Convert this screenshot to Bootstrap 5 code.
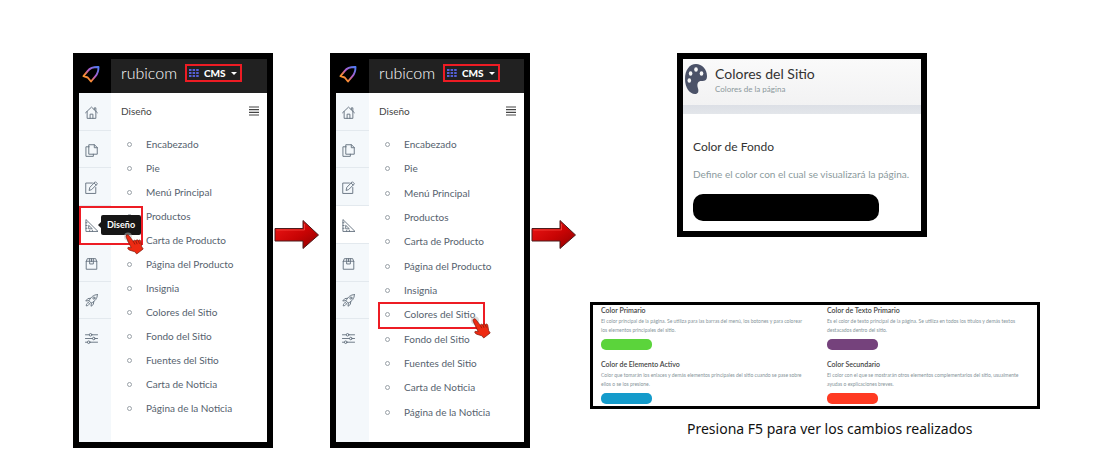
<!DOCTYPE html>
<html lang="es">
<head>
<meta charset="utf-8">
<meta name="viewport" content="width=device-width, initial-scale=1">
<title>Colores del Sitio</title>
<link href="https://cdn.jsdelivr.net/npm/bootstrap@5.3.0/dist/css/bootstrap.min.css" rel="stylesheet">
<style>
body { font-family: Lato, "Liberation Sans", sans-serif; background: #fff; color: #333; }
a { text-decoration: none; color: inherit; }
.guide { display: grid; grid-template-columns: 200fr 57fr 200fr 60fr 450fr; padding: 53px 60px 0 73px; }
.framed { border: 6px solid #000; background: #fff; }
.step-arrow { padding: 0 0 32px 1px; }
.topbar { height: 34px; background: #212121; }
.topbar-row { padding-bottom: 6px; }
.logo-cell { width: var(--rail); padding: 0 0 5px 3px; background: #000; }
.wordmark { font-weight: 300; font-size: 16px; line-height: 20px; color: #fff; width: 64px; margin-left: 10px; }
.cms-btn { border: 2px solid #ed1c24; background: transparent; color: #fff; font-weight: 900; font-size: 10px; line-height: 14px; height: 18px; padding: 0 3px 0 2px; gap: 5px; }
.cms-btn::after { margin: 0 !important; border-width: 3px 3px 0 !important; }
.rail { width: var(--rail); background: #f4f8fb; }
.rail-list { height: 263px; }
.rail-list a { flex: 1; border-bottom: 1px solid #e3e9ee; position: relative; padding-left: 6px; padding-top: 2px; }
.rail-list a:last-child { border-bottom: 0; }
.rail-list a.current { background: #fff; }
.rail-list svg { width: 13px; height: 13px; fill: none; stroke: #66727f; stroke-width: 1; stroke-linejoin: round; stroke-linecap: round; }
.marked { position: absolute; left: 0; top: 0; width: 64px; height: 39px; border: 2px solid #ed1c24; z-index: 2; }
.tip { position: absolute; left: 22px; top: 9px; height: 20px; line-height: 20px; padding: 0 6px; background: #161616; color: #fff; font-size: 9px; font-weight: 700; border-radius: 2px; z-index: 3; }
.tip::before { content: ""; position: absolute; left: -3px; top: 7px; border: 3px solid transparent; border-left: 0; border-right-color: #161616; }
.hand { position: absolute; z-index: 4; width: 22px; height: 24px; }
.rail-list svg.hand, svg.hand { width: 22px; height: 24px; stroke: none; }
.hand-rail { left: 45px; top: 26px; }
.hand-menu { left: 102px; top: 14px; }
.menu-head { height: 39px; padding: 0 8px 3px 10px; font-size: 10px; color: #444; }
.menu { height: var(--menu); font-size: 10px; line-height: 14px; color: #56626e; }
.menu-col { padding-bottom: 18px; }
.menu li { flex: 1; position: relative; padding-left: 35px; }
.menu a::before { content: ""; width: 5px; height: 5px; border: 1px solid #9aa1a8; border-radius: 50%; position: absolute; left: 16px; top: 10px; }
.menu li.picked::before { content: ""; position: absolute; left: 9px; right: 39px; top: 0; bottom: -2px; border: 2px solid #ed1c24; }
.site-card { max-width: 250px; margin-left: 87px; }
.site-head { height: 46px; padding: 5px 2px; gap: 8px; background: linear-gradient(#fafafa, #f2f2f3); }
.site-strip { height: 9px; background: linear-gradient(#dcdfe6, #e3e6ea); }
.site-title { font-size: 14px; line-height: 19px; color: #333; }
.site-sub { font-size: 8px; line-height: 12px; color: #8b989c; }
.site-body { padding: 23px 9px 10px 10px; }
.site-body label { display: block; font-size: 12px; line-height: 20px; color: #333; }
.site-body p { font-size: 10px; line-height: 18px; color: #8b9a9d; margin: 8px 0 11px; }
input[type=color] { display: block; appearance: none; border: 0; padding: 0; background: none; }
input[type=color]::-webkit-color-swatch-wrapper { padding: 0; }
input[type=color]::-webkit-color-swatch { border: 0; border-radius: inherit; }
.pick-big { width: 85%; height: 27px; border-radius: 10px; }
.palette-card { border: 3px solid #000; margin-top: 65px; padding: 0 0 1px 8px; }
.palette-card label { font-size: 7px; line-height: 10px; color: #444; font-weight: 600; }
.palette-card p { font-size: 5px; line-height: 9px; color: #86949a; margin: 2px 0 4px; }
.palette-card .entry { height: 54px; }
.palette-card .entry.low { height: 46px; }
.pick-small { width: 51px; height: 11px; border-radius: 5px; }
.closing { font-family: "Noto Sans", sans-serif; font-size: 14px; line-height: 20px; color: #111; margin: 10px 0 0 97px; }
</style>
</head>
<body>
<svg width="0" height="0" class="position-absolute" aria-hidden="true">
  <defs>
    <linearGradient id="lg" x1="0" y1="1" x2="1" y2="0"><stop offset="0" stop-color="#ffb01f"/><stop offset=".3" stop-color="#f5843a"/><stop offset=".55" stop-color="#b65cc8"/><stop offset="1" stop-color="#4c7cf5"/></linearGradient>
    <linearGradient id="red" x1="0" y1="0" x2="1" y2="1"><stop offset="0" stop-color="#f01818"/><stop offset=".55" stop-color="#c80404"/><stop offset="1" stop-color="#8d0000"/></linearGradient>
    <symbol id="logo" viewBox="0 0 18 18"><path d="M16.500 2C11.500 1.800 8 3 5.800 5.800L1.500 11.200l4.200 1.300L9 16.500l4.500-5.300C15.800 8.500 16.500 5.500 16.500 2z" fill="none" stroke="url(#lg)" stroke-width="1.900" stroke-linejoin="round"/></symbol>
    <symbol id="arrow" viewBox="0 0 46 31"><path d="M1 9.500h28V1.500L44.500 16 29 29.500v-7.500H1z" fill="url(#red)" stroke="#4d1c1c" stroke-width="1"/><path d="M2.500 11h28V5" fill="none" stroke="#ff5a50" stroke-width="1" opacity=".6"/></symbol>
    <symbol id="hand" viewBox="0 0 22 24"><circle cx="4" cy="4.500" r="4" fill="#bbb" opacity=".5"/><path d="M2.500 3.200c.9-.8 2-.3 2.700.7l4 5.300c.6-1.200 1.700-1.300 2.500-.4.700-1.200 1.900-1.200 2.600-.2.800-1 2-.7 2.400.4l1 5.700 1.500 2.300-6.500 5-1.800-2.200-5.200-1.600c-1.700-.7-2.500-1.900-1.500-2.900l3 .4-4.700-9.800c-.6-1.200-.6-2.100 0-2.700z" fill="#ee2a12" stroke="#7a1509" stroke-width=".7"/><path d="M9.300 9.400l1.500 2.800M11.800 9l1.200 2.800M14.400 8.900l1 2.600" stroke="#7a1509" stroke-width=".7" fill="none"/></symbol>
    <symbol id="home" viewBox="0 0 14 14"><path d="M.6 7.300L7 1.200l6.400 6.100M2.300 6v7.300h9.400V6M5.500 13.300V8.800h3v4.500M10 4V2h1.700v3.500"/></symbol>
    <symbol id="copy" viewBox="0 0 14 14"><path d="M4.500.8h5.700l3 3v7.200H4.500zM10 .8v3.200h3.200M4.500 3H1v10.300h8V11"/></symbol>
    <symbol id="edit" viewBox="0 0 14 14"><path d="M8 2.200H.8v11.200h10.800V7M4.500 9.800l.7-3 6-6 2.200 2.200-6 6zM9.800 2.200L12 4.400"/></symbol>
    <symbol id="ruler" viewBox="0 0 14 14"><path d="M1 1v12.400h12.600zM4 7.200v3.400h3.500zM1 4h1.200M1 7h1.200M1 10h1.200M5 13.400v-1M8 13.400v-1"/></symbol>
    <symbol id="box" viewBox="0 0 14 14"><path d="M1.300 5v8.200h11.400V5zM1.300 5l1.200-3.200h9L12.700 5M5 1.800V7.500h4V1.800M7 1.800V5"/></symbol>
    <symbol id="rocket" viewBox="0 0 14 14"><path d="M13.300.7C9 .7 6.800 3.200 4.200 7.200l2.600 2.600C11 7.500 13.300 5 13.300.7zM5.800 4.600L3 5 .8 7.500l3.400-.3M9.400 8.200L9 11.200l-2.500 2 .3-3.400M3.800 9.200C2 9.500 1.500 11 1.300 12.800c1.700-.2 3.200-.8 3.500-2.600"/><circle cx="9.600" cy="4.400" r="1.200"/></symbol>
    <symbol id="sliders" viewBox="0 0 14 14"><path d="M.5 3h4M7.500 3h6M.5 7h7.500M11 7h2.500M.5 11h2M5.500 11h8"/><circle cx="6" cy="3" r="1.400"/><circle cx="9.500" cy="7" r="1.400"/><circle cx="4" cy="11" r="1.400"/></symbol>
    <symbol id="bars" viewBox="0 0 10 10"><path d="M0 1h10M0 3.700h10M0 6.300h10M0 9h10" stroke="#444" stroke-width="1.200"/></symbol>
    <symbol id="dots" viewBox="0 0 10 8"><path d="M0 0h2.500v2H0zM3.600 0h2.500v2H3.600zM7.200 0h2.500v2H7.200zM0 3h2.500v2H0zM3.600 3h2.500v2H3.600zM7.200 3h2.500v2H7.200zM0 6h2.500v2H0zM3.600 6h2.500v2H3.600zM7.200 6h2.500v2H7.200z" fill="#5560d8"/></symbol>
  </defs>
</svg>

<main class="guide">
  <section class="framed d-flex flex-column" style="--rail:32px;--menu:288px">
    <header class="topbar d-flex align-items-stretch">
      <a href="#" class="logo-cell d-flex align-items-center" aria-label="Inicio"><svg width="18" height="18"><use href="#logo"/></svg></a>
      <div class="topbar-row d-flex align-items-center"><span class="wordmark">rubicom</span>
      <button type="button" class="cms-btn dropdown-toggle d-flex align-items-center"><svg width="10" height="8"><use href="#dots"/></svg>CMS</button></div>
    </header>
    <div class="d-flex flex-fill">
      <nav class="rail" aria-label="Secciones">
        <div class="rail-list d-flex flex-column">
          <a href="#" class="d-flex align-items-center" aria-label="Inicio"><svg><use href="#home"/></svg></a>
          <a href="#" class="d-flex align-items-center" aria-label="Páginas"><svg><use href="#copy"/></svg></a>
          <a href="#" class="d-flex align-items-center" aria-label="Editar"><svg><use href="#edit"/></svg></a>
          <a href="#" class="current d-flex align-items-center"><svg><use href="#ruler"/></svg><span class="marked"></span><span class="tip">Diseño</span><svg class="hand hand-rail"><use href="#hand"/></svg></a>
          <a href="#" class="d-flex align-items-center" aria-label="Productos"><svg><use href="#box"/></svg></a>
          <a href="#" class="d-flex align-items-center" aria-label="Lanzar"><svg><use href="#rocket"/></svg></a>
          <a href="#" class="d-flex align-items-center" aria-label="Ajustes"><svg><use href="#sliders"/></svg></a>
        </div>
      </nav>
      <div class="menu-col flex-fill">
        <div class="menu-head d-flex align-items-center justify-content-between"><span>Diseño</span><svg width="10" height="10"><use href="#bars"/></svg></div>
        <ul class="menu list-unstyled d-flex flex-column mb-0">
          <li class="d-flex align-items-center"><a href="#">Encabezado</a></li>
          <li class="d-flex align-items-center"><a href="#">Pie</a></li>
          <li class="d-flex align-items-center"><a href="#">Menú Principal</a></li>
          <li class="d-flex align-items-center"><a href="#">Productos</a></li>
          <li class="d-flex align-items-center"><a href="#">Carta de Producto</a></li>
          <li class="d-flex align-items-center"><a href="#">Página del Producto</a></li>
          <li class="d-flex align-items-center"><a href="#">Insignia</a></li>
          <li class="d-flex align-items-center"><a href="#">Colores del Sitio</a></li>
          <li class="d-flex align-items-center"><a href="#">Fondo del Sitio</a></li>
          <li class="d-flex align-items-center"><a href="#">Fuentes del Sitio</a></li>
          <li class="d-flex align-items-center"><a href="#">Carta de Noticia</a></li>
          <li class="d-flex align-items-center"><a href="#">Página de la Noticia</a></li>
        </ul>
      </div>
    </div>
  </section>

  <div class="step-arrow d-flex align-items-center"><svg width="46" height="31"><use href="#arrow"/></svg></div>

  <section class="framed d-flex flex-column" style="--rail:33px;--menu:292px">
    <header class="topbar d-flex align-items-stretch">
      <a href="#" class="logo-cell d-flex align-items-center" aria-label="Inicio"><svg width="18" height="18"><use href="#logo"/></svg></a>
      <div class="topbar-row d-flex align-items-center"><span class="wordmark">rubicom</span>
      <button type="button" class="cms-btn dropdown-toggle d-flex align-items-center"><svg width="10" height="8"><use href="#dots"/></svg>CMS</button></div>
    </header>
    <div class="d-flex flex-fill">
      <nav class="rail" aria-label="Secciones">
        <div class="rail-list d-flex flex-column">
          <a href="#" class="d-flex align-items-center" aria-label="Inicio"><svg><use href="#home"/></svg></a>
          <a href="#" class="d-flex align-items-center" aria-label="Páginas"><svg><use href="#copy"/></svg></a>
          <a href="#" class="d-flex align-items-center" aria-label="Editar"><svg><use href="#edit"/></svg></a>
          <a href="#" class="current d-flex align-items-center" aria-label="Diseño"><svg><use href="#ruler"/></svg></a>
          <a href="#" class="d-flex align-items-center" aria-label="Productos"><svg><use href="#box"/></svg></a>
          <a href="#" class="d-flex align-items-center" aria-label="Lanzar"><svg><use href="#rocket"/></svg></a>
          <a href="#" class="d-flex align-items-center" aria-label="Ajustes"><svg><use href="#sliders"/></svg></a>
        </div>
      </nav>
      <div class="menu-col flex-fill">
        <div class="menu-head d-flex align-items-center justify-content-between"><span>Diseño</span><svg width="10" height="10"><use href="#bars"/></svg></div>
        <ul class="menu list-unstyled d-flex flex-column mb-0">
          <li class="d-flex align-items-center"><a href="#">Encabezado</a></li>
          <li class="d-flex align-items-center"><a href="#">Pie</a></li>
          <li class="d-flex align-items-center"><a href="#">Menú Principal</a></li>
          <li class="d-flex align-items-center"><a href="#">Productos</a></li>
          <li class="d-flex align-items-center"><a href="#">Carta de Producto</a></li>
          <li class="d-flex align-items-center"><a href="#">Página del Producto</a></li>
          <li class="d-flex align-items-center"><a href="#">Insignia</a></li>
          <li class="picked d-flex align-items-center"><a href="#">Colores del Sitio</a><svg class="hand hand-menu"><use href="#hand"/></svg></li>
          <li class="d-flex align-items-center"><a href="#">Fondo del Sitio</a></li>
          <li class="d-flex align-items-center"><a href="#">Fuentes del Sitio</a></li>
          <li class="d-flex align-items-center"><a href="#">Carta de Noticia</a></li>
          <li class="d-flex align-items-center"><a href="#">Página de la Noticia</a></li>
        </ul>
      </div>
    </div>
  </section>

  <div class="step-arrow d-flex align-items-center"><svg width="46" height="31"><use href="#arrow"/></svg></div>

  <div>
    <section class="framed site-card">
      <header class="site-head d-flex">
        <svg width="22" height="30" viewBox="0 0 22 30"><path d="M11 0C4.500 0 0 6 0 15c0 8.500 4.500 15 10 15 3 0 4-2.500 3-5.500-1.500-5 0-7.500 3.500-7.500 4 0 5.500-1 5.500-5C22 5 17 0 11 0z" fill="#4b5268"/><g fill="#f7f7f7"><ellipse cx="4.300" cy="16.500" rx="1.800" ry="2.300"/><ellipse cx="5.600" cy="9.500" rx="1.800" ry="2.300"/><ellipse cx="11" cy="5.500" rx="1.800" ry="2.300"/><ellipse cx="16.500" cy="9.500" rx="1.800" ry="2.300"/></g></svg>
        <div><h1 class="site-title fw-normal mb-0">Colores del Sitio</h1><div class="site-sub">Colores de la página</div></div>
      </header>
      <div class="site-strip"></div>
      <div class="site-body">
        <label for="fondo">Color de Fondo</label>
        <p class="text-nowrap">Define el color con el cual se visualizará la página.</p>
        <input type="color" id="fondo" class="pick-big" value="#000000">
      </div>
    </section>

    <section class="framed palette-card">
      <div class="row g-0">
        <div class="col-6 entry"><label class="d-block" for="c1">Color Primario</label><p>El color principal de la página. Se utiliza para las barras del menú, los botones y para colorear<br>los elementos principales del sitio.</p><input type="color" id="c1" class="pick-small" value="#5bd43b"></div>
        <div class="col-6 entry ps-2"><label class="d-block" for="c2">Color de Texto Primario</label><p>Es el color de texto principal de la página. Se utiliza en todos los títulos y demás textos<br>destacados dentro del sitio.</p><input type="color" id="c2" class="pick-small" value="#75427c"></div>
        <div class="col-6 entry low"><label class="d-block" for="c3">Color de Elemento Activo</label><p>Color que tomarán los enlaces y demás elementos principales del sitio cuando se pase sobre<br>ellos o se los presione.</p><input type="color" id="c3" class="pick-small" value="#149bcb"></div>
        <div class="col-6 entry low ps-2"><label class="d-block" for="c4">Color Secundario</label><p>El color con el que se mostrarán otros elementos complementarios del sitio, usualmente<br>ayudas o explicaciones breves.</p><input type="color" id="c4" class="pick-small" value="#ff3a22"></div>
      </div>
    </section>
    <p class="closing">Presiona F5 para ver los cambios realizados</p>
  </div>
</main>
<script src="https://cdn.jsdelivr.net/npm/bootstrap@5.3.0/dist/js/bootstrap.bundle.min.js"></script>
</body>
</html>
